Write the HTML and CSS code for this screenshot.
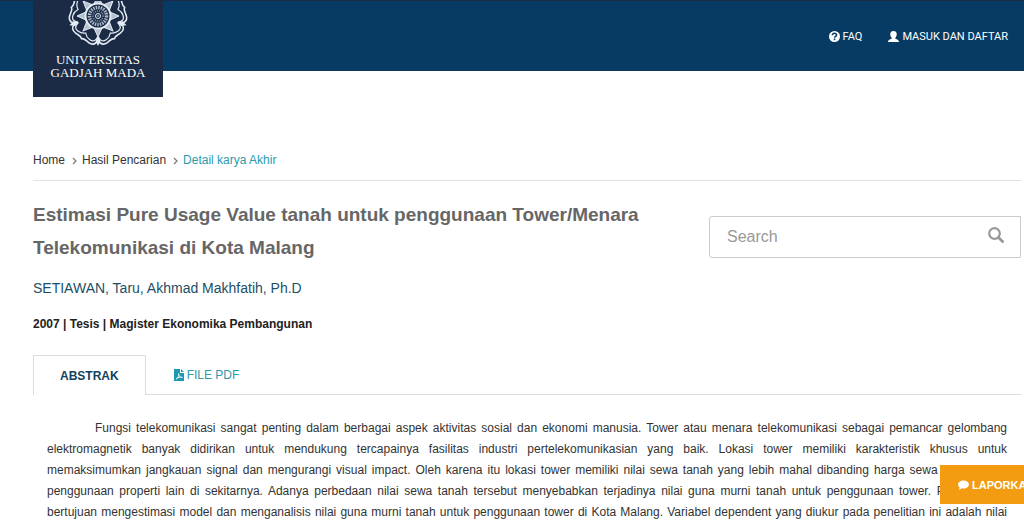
FILE: index.html
```html
<!DOCTYPE html>
<html lang="id">
<head>
    <meta charset="UTF-8">
    <meta name="viewport" content="width=device-width, initial-scale=1.0">
    <title>Estimasi Pure Usage Value tanah untuk penggunaan Tower/Menara Telekomunikasi di Kota Malang</title>
    <link rel="stylesheet" href="styles.css">
</head>
<body>
    <header class="header">
        <a href="#" class="logo">
            <svg class="logo-emblem" viewBox="-31 -15 62 46" fill="none" stroke="#e4ebf5">
                <defs>
                    <!-- one petal, pointing down, notch at the tip -->
                    <g id="petal">
                        <path stroke-width="1.6" d="M-14 20 C-15 25 -12 27 -8 27 C-4 27 -2 26 0 28 C2 26 4 27 8 27 C12 27 15 25 14 20"/>
                        <path stroke-width="1.2" d="M-12 17 C-13 22 -11 24 -7 24 C-4 24 -2 23 0 21 C2 23 4 24 7 24 C11 24 13 22 12 17"/>
                    </g>
                    <path id="ray" d="M-4 -12 L0 -21 L4 -12 Z"/>
                </defs>
                <use href="#petal" transform="rotate(36)"/>
                <use href="#petal" transform="rotate(-36)"/>
                <use href="#petal" transform="rotate(108)"/>
                <use href="#petal" transform="rotate(-108)"/>
                <use href="#petal" transform="rotate(180)"/>
                <!-- tips between the petals -->
                <g fill="#e4ebf5" stroke="none">
                    <path d="M-2.5 25 L0 30 L2.5 25 L0 20 Z"/>
                    <path d="M-2.5 25 L0 30 L2.5 25 L0 20 Z" transform="rotate(72)"/>
                    <path d="M-2.5 25 L0 30 L2.5 25 L0 20 Z" transform="rotate(-72)"/>
                </g>
                <!-- sun rays -->
                <g stroke-width="1" fill="#b4bfd0">
                    <use href="#ray"/>
                    <use href="#ray" transform="rotate(45)"/>
                    <use href="#ray" transform="rotate(90)"/>
                    <use href="#ray" transform="rotate(135)"/>
                    <use href="#ray" transform="rotate(180)"/>
                    <use href="#ray" transform="rotate(225)"/>
                    <use href="#ray" transform="rotate(270)"/>
                    <use href="#ray" transform="rotate(315)"/>
                </g>
                <!-- center disc -->
                <circle r="12.5" fill="#1b2b45" stroke-width="2"/>
                <circle r="8.5" stroke="#a9b5c9" stroke-width="3.5" stroke-dasharray="1.5 1"/>
                <circle r="5" stroke="#8493ac" stroke-width="1.5" stroke-dasharray="1 1"/>
                <circle r="2.5" stroke-width="1"/>
                <circle r="0.8" fill="#e4ebf5" stroke="none"/>
            </svg>
            <span class="logo-text">UNIVERSITAS<br>GADJAH MADA</span>
        </a>
        <nav class="top-nav">
            <a href="#">
                <svg class="icon-faq" viewBox="0 0 16 16">
                    <circle cx="8" cy="8" r="8" fill="#fff"/>
                    <path d="M5 6.3 C5 2.4 11.2 2.6 11 6 C10.9 7.8 8 7.9 8 9.9" fill="none" stroke="#073b63" stroke-width="2.2"/>
                    <rect x="6.9" y="11" width="2.3" height="2.3" fill="#073b63"/>
                </svg>
                FAQ
            </a>
            <a href="#">
                <svg class="icon-user" viewBox="0 0 16 16" fill="#fff">
                    <path d="M8 0 C11.5 0 12.8 2 12.7 5 C12.6 7.3 11.6 8.6 10.6 9.7 V11 C11.6 12 15.8 12.2 16 16 H0 C0.2 12.2 4.4 12 5.4 11 V9.7 C4.4 8.6 3.4 7.3 3.3 5 C3.2 2 4.5 0 8 0 Z"/>
                </svg>
                MASUK DAN DAFTAR
            </a>
        </nav>
    </header>

    <main class="container">
        <nav class="breadcrumb">
            <a href="#">Home</a>
            <svg class="chevron" viewBox="0 0 5 8"><path d="M1 1 L4 4 L1 7" fill="none" stroke="#777" stroke-width="1.2"/></svg>
            <a href="#">Hasil Pencarian</a>
            <svg class="chevron" viewBox="0 0 5 8"><path d="M1 1 L4 4 L1 7" fill="none" stroke="#777" stroke-width="1.2"/></svg>
            <a href="#" class="active">Detail karya Akhir</a>
        </nav>

        <div class="top-row">
            <div class="detail">
                <h1>Estimasi Pure Usage Value tanah untuk penggunaan Tower/Menara Telekomunikasi di Kota Malang</h1>
                <p class="author">SETIAWAN, Taru, Akhmad Makhfatih, Ph.D</p>
                <p class="meta">2007 | Tesis | Magister Ekonomika Pembangunan</p>
            </div>
            <form class="search">
                <input type="text" placeholder="Search" aria-label="Search">
                <button type="submit" aria-label="Cari">
                    <svg viewBox="0 0 16 16" fill="none" stroke="#999">
                        <circle cx="6.5" cy="6.5" r="5.3" stroke-width="2.2"/>
                        <path d="M10.4 10.4 L14.6 14.6" stroke-width="2.8" stroke-linecap="round"/>
                    </svg>
                </button>
            </form>
        </div>

        <div class="tabs">
            <a href="#" class="tab active">ABSTRAK</a>
            <a href="#" class="tab">
                <svg class="icon-pdf" viewBox="0 0 10 12">
                    <path d="M0 0 H6 V4 H10 V12 H0 Z M7 0 L10 3 H7 Z" fill="#1c9ab0"/>
                    <path d="M2 10 C4 9 5 7 4.6 4.6 C5 7 6 8.6 8.3 8.4 C6 7.8 4 8.4 2 10 Z" fill="none" stroke="#fff" stroke-width="0.8"/>
                </svg>
                FILE PDF
            </a>
        </div>

        <div class="tab-content">
            <p>
                Fungsi telekomunikasi sangat penting dalam berbagai aspek aktivitas sosial dan ekonomi manusia. Tower atau menara telekomunikasi sebagai pemancar gelombang<br>
                elektromagnetik banyak didirikan untuk mendukung tercapainya fasilitas industri pertelekomunikasian yang baik. Lokasi tower memiliki karakteristik khusus untuk<br>
                memaksimumkan jangkauan signal dan mengurangi visual impact. Oleh karena itu lokasi tower memiliki nilai sewa tanah yang lebih mahal dibanding harga sewa tanah untuk<br>
                penggunaan properti lain di sekitarnya. Adanya perbedaan nilai sewa tanah tersebut menyebabkan terjadinya nilai guna murni tanah untuk penggunaan tower. Penelitian ini<br>
                bertujuan mengestimasi model dan menganalisis nilai guna murni tanah untuk penggunaan tower di Kota Malang. Variabel dependent yang diukur pada penelitian ini adalah nilai
            </p>
        </div>
    </main>

    <button type="button" class="report">
        <svg viewBox="0 0 12 11" fill="#fff"><path d="M6 0.5 C9.3 0.5 12 2.4 12 5 C12 7.6 9.3 9.4 6 9.4 C5.3 9.4 4.7 9.3 4.1 9.2 C3.2 10 2 10.6 0.6 10.6 C1.3 9.9 1.7 9.1 1.7 8.2 C0.6 7.4 0 6.3 0 5 C0 2.4 2.7 0.5 6 0.5 Z"/></svg>
        LAPORKAN
    </button>
</body>
</html>
```

FILE: styles.css
```css
* {
    box-sizing: border-box;
}
body {
    margin: 0;
    font-family: "Liberation Sans", Arial, sans-serif;
    font-size: 12px;
    color: #333;
    background-color: #fff;
    overflow-x: hidden;
}
a {
    color: inherit;
    text-decoration: none;
}

/* Header */
.header {
    display: flex;
    justify-content: space-between;
    align-items: flex-start;
    height: 71px;
    padding: 0 16px 0 33px;
    background-color: #073b63;
    border-top: 1px solid #1b2b45;
}
.logo {
    display: flex;
    flex-direction: column;
    align-items: center;
    width: 130px;
    height: 96px;
    background-color: #1b2b45;
}
.logo-emblem {
    width: 62px;
    height: 46px;
}
.logo-text {
    margin-top: 6px;
    font-family: "Liberation Serif", "Times New Roman", serif;
    font-size: 13px;
    line-height: 13px;
    text-align: center;
    color: #fff;
}
.top-nav {
    display: flex;
    gap: 26px;
    padding-top: 28px;
    font-family: Roboto, "Liberation Sans", sans-serif;
    font-size: 11px;
    line-height: 15px;
    color: #fff;
}
.top-nav a {
    display: flex;
    align-items: center;
    gap: 3px;
}
.top-nav svg {
    width: 11px;
    height: 11px;
}

/* Main content */
.container {
    padding: 81px 3px 0 33px;
}
.breadcrumb {
    display: flex;
    align-items: center;
    padding-bottom: 11px;
    border-bottom: 1px solid #e2e2e2;
    line-height: 17px;
}
.breadcrumb .active {
    color: #2b9aac;
}
.chevron {
    width: 5px;
    height: 8px;
    margin: 0 5px 0 7px;
}
.top-row {
    display: flex;
    justify-content: space-between;
    align-items: flex-start;
    padding-top: 17px;
}
.detail {
    width: 64%;
}
h1 {
    margin: 0;
    font-size: 19px;
    line-height: 33px;
    color: #666;
}
.author {
    margin: 14px 0 0;
    font-size: 14px;
    line-height: 20px;
    color: #1b4f66;
}
.meta {
    margin: 18px 0 0;
    font-weight: bold;
    line-height: 16px;
    color: #222;
}
.search {
    display: flex;
    align-items: center;
    width: 312px;
    height: 42px;
    margin-top: 18px;
    border: 1px solid #ccc;
    border-radius: 3px 0 0 3px;
}
.search input {
    flex: 1;
    min-width: 0;
    padding: 0 17px;
    border: none;
    outline: none;
    font-family: inherit;
    font-size: 16px;
    background: none;
}
.search input::placeholder {
    color: #999;
}
.search button {
    padding: 0 16px 4px;
    border: none;
    background: none;
    cursor: pointer;
}
.search svg {
    display: block;
    width: 16px;
    height: 16px;
}

/* Tabs */
.tabs {
    display: flex;
    margin-top: 23px;
    border-bottom: 1px solid #ddd;
}
.tab {
    display: flex;
    align-items: center;
    gap: 3px;
    height: 39px;
    padding: 0 28px;
    color: #2b9aac;
}
.tab.active {
    height: 40px;
    margin-bottom: -1px;
    padding: 0 26px;
    border: 1px solid #ddd;
    border-bottom: none;
    background-color: #fff;
    font-weight: bold;
    color: #12425e;
}
.icon-pdf {
    width: 10px;
    height: 12px;
}
.tab-content {
    padding: 23px 14px 0;
}
.tab-content p {
    margin: 0;
    line-height: 21px;
    text-indent: 48px;
    text-align: justify;
    text-align-last: justify;
}

/* Report button, runs off the right edge */
.report {
    position: fixed;
    right: -28px;
    bottom: 17px;
    display: flex;
    align-items: center;
    gap: 3px;
    width: 112px;
    height: 39px;
    padding: 0 18px;
    border: none;
    background-color: #f39c12;
    font-family: inherit;
    font-size: 11px;
    font-weight: bold;
    color: #fff;
    cursor: pointer;
}
.report svg {
    flex: none;
    width: 11px;
    height: 10px;
}
```
